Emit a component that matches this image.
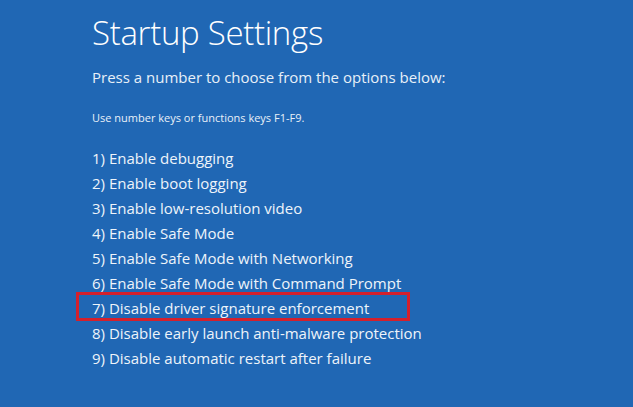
export default function App() {
  const items = [
    '1) Enable debugging',
    '2) Enable boot logging',
    '3) Enable low-resolution video',
    '4) Enable Safe Mode',
    '5) Enable Safe Mode with Networking',
    '6) Enable Safe Mode with Command Prompt',
    '7) Disable driver signature enforcement',
    '8) Disable early launch anti-malware protection',
    '9) Disable automatic restart after failure',
  ];

  return (
    <div
      className="w-[633px] h-[407px] bg-[#2067b4] text-white overflow-hidden pl-[92px] pt-[8px]"
      style={{ fontFamily: '"Open Sans", "Noto Sans", sans-serif' }}
    >
      <h1 className="text-[33px] font-light leading-[50px] tracking-[-0.3px]">Startup Settings</h1>
      <p className="mt-[8px] text-[15px] leading-[22px] text-[#e8f0f8]">Press a number to choose from the options below:</p>
      <p className="mt-[22px] text-[11px] leading-[16px] text-[#e8f0f8]">Use number keys or functions keys F1-F9.</p>
      <ul className="mt-[20px]">
        {items.map((t, i) => (
          <li key={i} className="relative text-[15px] leading-[25px] text-[#eef4fa]">
            {t}
            {i === 6 && (
              <div className="absolute left-[-16px] top-[-4px] w-[334px] h-[29px] border-[3px] border-[#d4202c]" />
            )}
          </li>
        ))}
      </ul>
    </div>
  );
}
